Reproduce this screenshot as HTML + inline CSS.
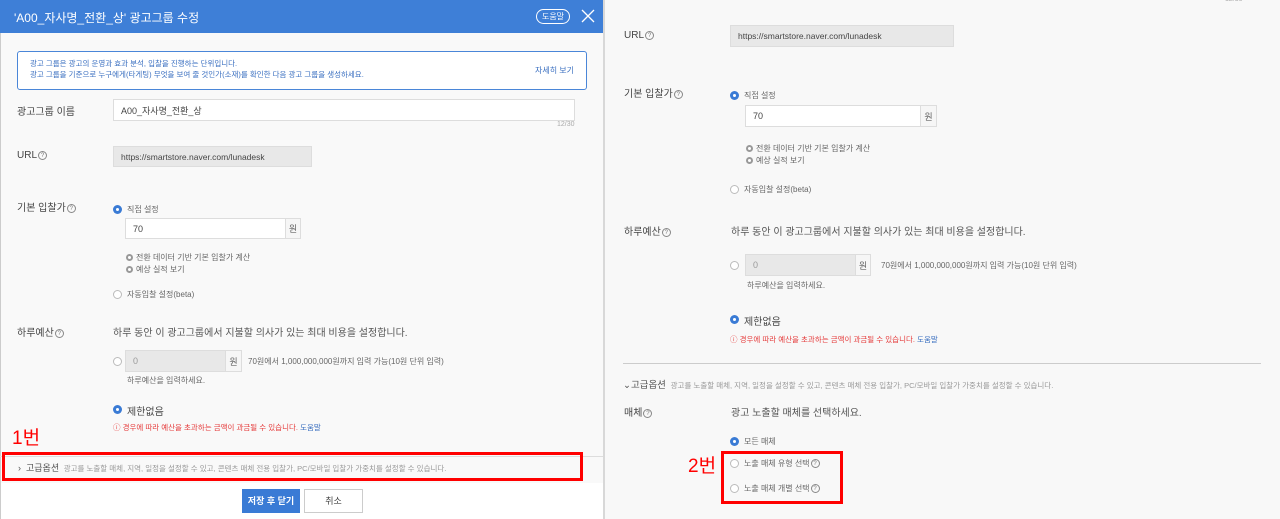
<!DOCTYPE html>
<html><head><meta charset="utf-8"><style>
*{margin:0;padding:0;box-sizing:border-box}
body{width:1280px;height:519px;overflow:hidden;background:#f8f8f8;font-family:"Liberation Sans","Noto Sans CJK KR",sans-serif;color:#444;position:relative}
.a{position:absolute;white-space:nowrap}
.lbl{font-size:10px;color:#444}
.t9{font-size:8px;color:#666}
.inp{position:absolute;border:1px solid #ddd;background:#fff;font-size:9px;color:#444;padding-left:7px;display:flex;align-items:center}
.gray{background:#e8e8e8}
.won{position:absolute;border:1px solid #ddd;background:#f6f6f6;font-size:9px;color:#666;display:flex;align-items:center;justify-content:center}
.r{position:absolute;width:9px;height:9px;border-radius:50%;border:1px solid #bbb;background:#fff}
.r.on{border:none;background:#3a7bd5}
.r.on::after{content:"";position:absolute;left:3px;top:3px;width:3px;height:3px;background:#fff;border-radius:50%}
.s{position:absolute;width:7px;height:7px;border-radius:50%;border:2px solid #999;background:#fff}
.q{display:inline-block;width:9px;height:9px;border:1px solid #888;border-radius:50%;font-size:6px;text-align:center;line-height:8px;color:#777;vertical-align:middle;margin-left:1px}
</style></head><body>
<!-- left panel -->
<div class="a" style="left:0;top:0;width:603px;height:519px;background:#f9f9f9;border-left:1px solid #ccc"></div>
<div class="a" style="left:603px;top:0;width:2px;height:519px;background:#d8d8d8"></div>
<div class="a" style="left:0;top:0;width:603px;height:33px;background:#3e7fd7"></div>
<div class="a" style="left:14px;top:9px;font-size:12px;color:#fff">'A00_자사명_전환_상' 광고그룹 수정</div>
<div class="a" style="left:536px;top:9px;width:34px;height:15px;border:1px solid #fff;border-radius:8px;color:#fff;font-size:8px;text-align:center;line-height:13px">도움말</div>
<svg class="a" style="left:581px;top:9px" width="14" height="14"><path d="M1 1L13 13M13 1L1 13" stroke="#fff" stroke-width="1.3"/></svg>
<div class="a" style="left:17px;top:51px;width:570px;height:39px;border:1px solid #4a86d8;border-radius:3px;background:#fff"></div>
<div class="a" style="left:30px;top:58px;font-size:7.5px;color:#3a6fc0;line-height:11px">광고 그룹은 광고의 운영과 효과 분석, 입찰을 진행하는 단위입니다.<br>광고 그룹을 기준으로 누구에게(타게팅) 무엇을 보여 줄 것인가(소재)를 확인한 다음 광고 그룹을 생성하세요.</div>
<div class="a" style="left:535px;top:65px;font-size:8px;color:#3a6fc0">자세히 보기</div>
<div class="a lbl" style="left:17px;top:103px">광고그룹 이름</div>
<div class="inp" style="left:113px;top:99px;width:462px;height:22px">A00_자사명_전환_상</div>
<div class="a" style="left:557px;top:121px;font-size:7px;color:#aaa">12/30</div>
<div class="a lbl" style="left:17px;top:150px">URL<span class="q">?</span></div>
<div class="inp gray" style="left:113px;top:146px;width:199px;height:21px;font-size:8.5px">https://smartstore.naver.com/lunadesk</div>
<div class="a lbl" style="left:17px;top:199px">기본 입찰가<span class="q">?</span></div>
<div class="r on" style="left:113px;top:205px"></div>
<div class="a t9" style="left:127px;top:204px">직접 설정</div>
<div class="inp" style="left:125px;top:218px;width:161px;height:21px">70</div>
<div class="won" style="left:285px;top:218px;width:16px;height:21px">원</div>
<div class="s" style="left:126px;top:254px"></div><div class="a t9" style="left:136px;top:252px">전환 데이터 기반 기본 입찰가 계산</div>
<div class="s" style="left:126px;top:266px"></div><div class="a t9" style="left:136px;top:264px">예상 실적 보기</div>
<div class="r" style="left:113px;top:290px"></div><div class="a t9" style="left:127px;top:289px">자동입찰 설정(beta)</div>
<div class="a lbl" style="left:17px;top:324px">하루예산<span class="q">?</span></div>
<div class="a" style="left:113px;top:324px;font-size:10px;color:#555">하루 동안 이 광고그룹에서 지불할 의사가 있는 최대 비용을 설정합니다.</div>
<div class="r" style="left:113px;top:357px"></div>
<div class="inp gray" style="left:125px;top:350px;width:101px;height:22px;color:#999">0</div>
<div class="won" style="left:225px;top:350px;width:17px;height:22px">원</div>
<div class="a t9" style="left:248px;top:356px">70원에서 1,000,000,000원까지 입력 가능(10원 단위 입력)</div>
<div class="a t9" style="left:127px;top:375px">하루예산을 입력하세요.</div>
<div class="r on" style="left:113px;top:405px"></div><div class="a" style="left:127px;top:403px;font-size:10px;color:#444">제한없음</div>
<div class="a" style="left:113px;top:422px;font-size:7.5px;color:#e53a3a">ⓘ 경우에 따라 예산을 초과하는 금액이 과금될 수 있습니다. <span style="color:#3a6fc0">도움말</span></div>
<div class="a" style="left:12px;top:423px;font-size:19px;color:#f00">1번</div>
<div class="a" style="left:0;top:456px;width:603px;height:1px;background:#ddd"></div>
<div class="a" style="left:18px;top:461px;font-size:9px;color:#555">›&nbsp; 고급옵션 <span style="font-size:7.5px;color:#999">&nbsp;광고를 노출할 매체, 지역, 일정을 설정할 수 있고, 콘텐츠 매체 전용 입찰가, PC/모바일 입찰가 가중치를 설정할 수 있습니다.</span></div>
<div class="a" style="left:2px;top:452px;width:581px;height:29px;border:3px solid #f00"></div>
<div class="a" style="left:1px;top:483px;width:602px;height:36px;background:#fff"></div>
<div class="a" style="left:242px;top:489px;width:58px;height:24px;background:#3a7bd5;color:#fff;font-size:9px;text-align:center;line-height:24px;font-weight:bold">저장 후 닫기</div>
<div class="a" style="left:304px;top:489px;width:59px;height:24px;background:#fff;border:1px solid #ccc;color:#444;font-size:9px;text-align:center;line-height:22px">취소</div>
<!-- right panel -->
<div class="a" style="left:1225px;top:-4px;font-size:7px;color:#aaa">12/30</div>
<div class="a lbl" style="left:624px;top:30px">URL<span class="q">?</span></div>
<div class="inp gray" style="left:730px;top:25px;width:224px;height:22px;font-size:8.5px">https://smartstore.naver.com/lunadesk</div>
<div class="a lbl" style="left:624px;top:85px">기본 입찰가<span class="q">?</span></div>
<div class="r on" style="left:730px;top:91px"></div>
<div class="a t9" style="left:744px;top:90px">직접 설정</div>
<div class="inp" style="left:745px;top:105px;width:176px;height:22px">70</div>
<div class="won" style="left:920px;top:105px;width:17px;height:22px">원</div>
<div class="s" style="left:746px;top:145px"></div><div class="a t9" style="left:756px;top:143px">전환 데이터 기반 기본 입찰가 계산</div>
<div class="s" style="left:746px;top:157px"></div><div class="a t9" style="left:756px;top:155px">예상 실적 보기</div>
<div class="r" style="left:730px;top:185px"></div><div class="a t9" style="left:744px;top:184px">자동입찰 설정(beta)</div>
<div class="a lbl" style="left:624px;top:223px">하루예산<span class="q">?</span></div>
<div class="a" style="left:731px;top:223px;font-size:10px;color:#555">하루 동안 이 광고그룹에서 지불할 의사가 있는 최대 비용을 설정합니다.</div>
<div class="r" style="left:730px;top:261px"></div>
<div class="inp gray" style="left:745px;top:254px;width:111px;height:22px;color:#999">0</div>
<div class="won" style="left:855px;top:254px;width:16px;height:22px">원</div>
<div class="a t9" style="left:881px;top:260px">70원에서 1,000,000,000원까지 입력 가능(10원 단위 입력)</div>
<div class="a t9" style="left:747px;top:280px">하루예산을 입력하세요.</div>
<div class="r on" style="left:730px;top:315px"></div><div class="a" style="left:744px;top:313px;font-size:10px;color:#444">제한없음</div>
<div class="a" style="left:730px;top:334px;font-size:7.5px;color:#e53a3a">ⓘ 경우에 따라 예산을 초과하는 금액이 과금될 수 있습니다. <span style="color:#3a6fc0">도움말</span></div>
<div class="a" style="left:623px;top:363px;width:638px;height:1px;background:#ccc"></div>
<div class="a" style="left:623px;top:377px;font-size:9.5px;color:#555">⌄고급옵션 <span style="font-size:7.5px;color:#999">&nbsp;광고를 노출할 매체, 지역, 일정을 설정할 수 있고, 콘텐츠 매체 전용 입찰가, PC/모바일 입찰가 가중치를 설정할 수 있습니다.</span></div>
<div class="a lbl" style="left:624px;top:404px">매체<span class="q">?</span></div>
<div class="a" style="left:731px;top:404px;font-size:10px;color:#555">광고 노출할 매체를 선택하세요.</div>
<div class="r on" style="left:730px;top:437px"></div><div class="a t9" style="left:744px;top:436px">모든 매체</div>
<div class="a" style="left:688px;top:451px;font-size:19px;color:#f00">2번</div>
<div class="r" style="left:730px;top:459px"></div><div class="a t9" style="left:744px;top:458px">노출 매체 유형 선택<span class="q">?</span></div>
<div class="r" style="left:730px;top:484px"></div><div class="a t9" style="left:744px;top:483px">노출 매체 개별 선택<span class="q">?</span></div>
<div class="a" style="left:721px;top:451px;width:122px;height:53px;border:3px solid #f00"></div>
</body></html>
